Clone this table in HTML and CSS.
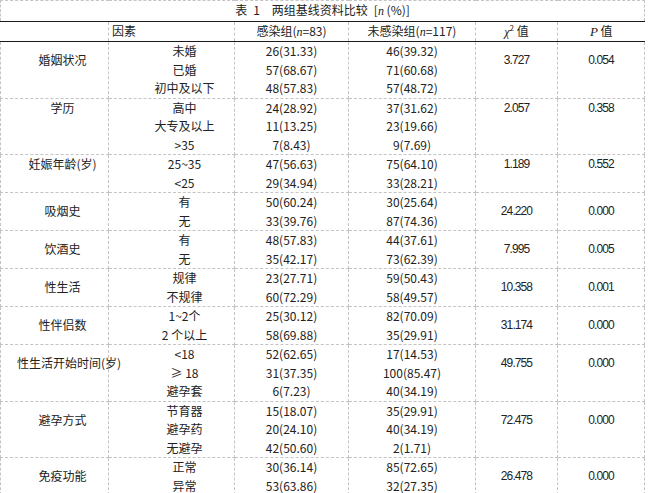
FILE: index.html
```html
<!DOCTYPE html>
<html lang="zh">
<head>
<meta charset="utf-8">
<title>两组基线资料比较</title>
<link rel="stylesheet" href="styles.css">
</head>
<body>
<table class="tbl">
  <colgroup>
    <col class="c1"><col class="c2"><col class="c3"><col class="c4"><col class="c5"><col class="c6">
  </colgroup>
  <tr class="title">
    <td colspan="6">表&ensp;1&ensp;&ensp;两组基线资料比较&ensp;[<i class="it">n</i> (%)]</td>
  </tr>
  <tr class="head">
    <th></th>
    <th class="left">因素</th>
    <th>感染组(<i class="it">n</i>=83)</th>
    <th>未感染组(<i class="it">n</i>=117)</th>
    <th><i class="chi">χ</i><sup>2</sup> 值</th>
    <th><i class="pv">P</i> 值</th>
  </tr>
  <tr class="grp">
    <td class="lab mid2">婚姻状况</td>
    <td class="sub"><div>未婚</div><div>已婚</div><div>初中及以下</div></td>
    <td class="num"><div>26(31.33)</div><div>57(68.67)</div><div>48(57.83)</div></td>
    <td class="num"><div>46(39.32)</div><div>71(60.68)</div><div>57(48.72)</div></td>
    <td class="stat mid2">3.727</td>
    <td class="stat mid2">0.054</td>
  </tr>
  <tr class="grp">
    <td class="lab top">学历</td>
    <td class="sub"><div>高中</div><div>大专及以上</div><div>&gt;35</div></td>
    <td class="num"><div>24(28.92)</div><div>11(13.25)</div><div>7(8.43)</div></td>
    <td class="num"><div>37(31.62)</div><div>23(19.66)</div><div>9(7.69)</div></td>
    <td class="stat top">2.057</td>
    <td class="stat top">0.358</td>
  </tr>
  <tr class="grp">
    <td class="lab top">妊娠年龄(岁)</td>
    <td class="sub"><div>25~35</div><div>&lt;25</div></td>
    <td class="num"><div>47(56.63)</div><div>29(34.94)</div></td>
    <td class="num"><div>75(64.10)</div><div>33(28.21)</div></td>
    <td class="stat top">1.189</td>
    <td class="stat top">0.552</td>
  </tr>
  <tr class="grp">
    <td class="lab">吸烟史</td>
    <td class="sub"><div>有</div><div>无</div></td>
    <td class="num"><div>50(60.24)</div><div>33(39.76)</div></td>
    <td class="num"><div>30(25.64)</div><div>87(74.36)</div></td>
    <td class="stat">24.220</td>
    <td class="stat">0.000</td>
  </tr>
  <tr class="grp">
    <td class="lab">饮酒史</td>
    <td class="sub"><div>有</div><div>无</div></td>
    <td class="num"><div>48(57.83)</div><div>35(42.17)</div></td>
    <td class="num"><div>44(37.61)</div><div>73(62.39)</div></td>
    <td class="stat">7.995</td>
    <td class="stat">0.005</td>
  </tr>
  <tr class="grp">
    <td class="lab">性生活</td>
    <td class="sub"><div>规律</div><div>不规律</div></td>
    <td class="num"><div>23(27.71)</div><div>60(72.29)</div></td>
    <td class="num"><div>59(50.43)</div><div>58(49.57)</div></td>
    <td class="stat">10.358</td>
    <td class="stat">0.001</td>
  </tr>
  <tr class="grp">
    <td class="lab">性伴侣数</td>
    <td class="sub"><div>1~2个</div><div>2 个以上</div></td>
    <td class="num"><div>25(30.12)</div><div>58(69.88)</div></td>
    <td class="num"><div>82(70.09)</div><div>35(29.91)</div></td>
    <td class="stat">31.174</td>
    <td class="stat">0.000</td>
  </tr>
  <tr class="grp">
    <td class="lab mid2">性生活开始时间(岁)</td>
    <td class="sub"><div>&lt;18</div><div>≥ 18</div><div>避孕套</div></td>
    <td class="num"><div>52(62.65)</div><div>31(37.35)</div><div>6(7.23)</div></td>
    <td class="num"><div>17(14.53)</div><div>100(85.47)</div><div>40(34.19)</div></td>
    <td class="stat mid2">49.755</td>
    <td class="stat mid2">0.000</td>
  </tr>
  <tr class="grp">
    <td class="lab mid2">避孕方式</td>
    <td class="sub"><div>节育器</div><div>避孕药</div><div>无避孕</div></td>
    <td class="num"><div>15(18.07)</div><div>20(24.10)</div><div>42(50.60)</div></td>
    <td class="num"><div>35(29.91)</div><div>40(34.19)</div><div>2(1.71)</div></td>
    <td class="stat mid2">72.475</td>
    <td class="stat mid2">0.000</td>
  </tr>
  <tr class="grp last">
    <td class="lab">免疫功能</td>
    <td class="sub"><div>正常</div><div>异常</div></td>
    <td class="num"><div>30(36.14)</div><div>53(63.86)</div></td>
    <td class="num"><div>85(72.65)</div><div>32(27.35)</div></td>
    <td class="stat">26.478</td>
    <td class="stat">0.000</td>
  </tr>
</table>
</body>
</html>
```
FILE: styles.css
```css
html, body {
  margin: 0;
  padding: 0;
  background: #ffffff;
}
body {
  font-family: "Noto Sans CJK SC", "Liberation Sans", sans-serif;
  font-size: 12px;
  color: #222222;
}
.tbl {
  border-collapse: collapse;
  table-layout: fixed;
  width: 644px;
}
.c1 { width: 108px; }
.c2 { width: 126px; }
.c3 { width: 114px; }
.c4 { width: 127px; }
.c5 { width: 82px; }
.c6 { width: 87px; }

.tbl td, .tbl th {
  padding: 0;
  white-space: nowrap;
  font-weight: normal;
  line-height: 18.5px;
  border-left: 1px dashed #c4c4c4;
  border-right: 1px dashed #c4c4c4;
  text-align: center;
}
.title td {
  height: 18px;
  border-top: 1px dashed #c4c4c4;
  border-bottom: 1px solid #1a1a1a;
  vertical-align: middle;
}
.head th {
  height: 18px;
  border-bottom: 1px solid #1a1a1a;
  vertical-align: middle;
}
.head th:first-child { border-left: none; }
.head th:last-child { border-right: none; }
.head .left {
  text-align: left;
  padding-left: 3px;
}
.it {
  font-family: "Liberation Serif", serif;
  font-style: italic;
}
.chi {
  font-family: "Liberation Serif", serif;
  font-style: italic;
}
.pv {
  font-family: "Liberation Serif", serif;
  font-style: italic;
  font-size: 13px;
}
sup {
  font-size: 8px;
  line-height: 0;
  vertical-align: 5px;
}
.grp td {
  border-top: 1px dashed #c4c4c4;
  border-bottom: 1px dashed #c4c4c4;
  vertical-align: middle;
}
.grp.last td {
  border-bottom: 1px solid #1a1a1a;
}
.lab {
  padding-left: 16px !important;
}
.sub {
  padding-left: 26px !important;
}
.grp .top {
  vertical-align: top;
}
.grp .mid2 {
  vertical-align: top;
  padding-top: 9px;
}
.stat {
  font-family: "Liberation Sans", sans-serif;
  letter-spacing: -0.9px;
}
.num {
  font-family: "Noto Sans CJK SC", "Liberation Sans", sans-serif;
}
```
